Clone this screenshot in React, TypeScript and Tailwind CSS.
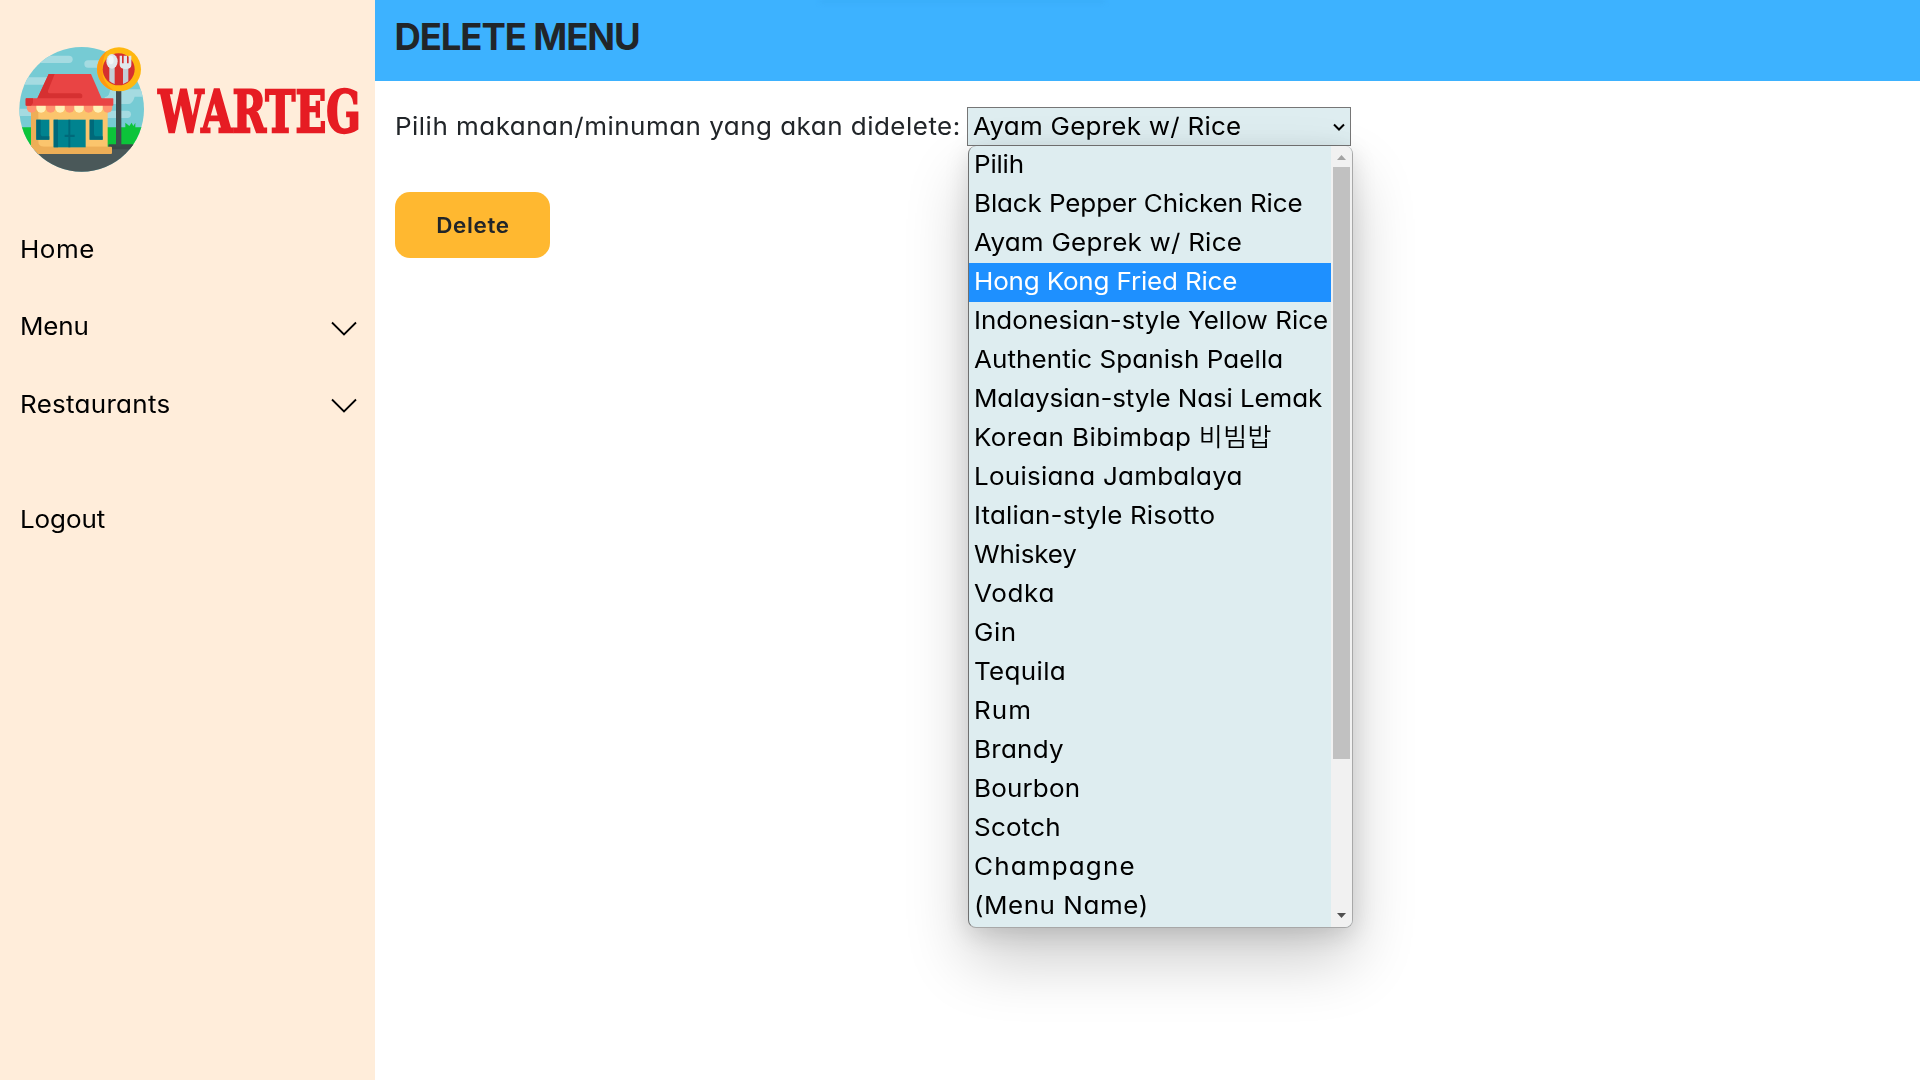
type Item = { label: string; spacing: string; extra?: string };

const options: Item[] = [
  { label: "Pilih", spacing: "tracking-[-0.2px]" },
  { label: "Black Pepper Chicken Rice", spacing: "tracking-[-0.12px]" },
  { label: "Ayam Geprek w/ Rice", spacing: "tracking-[0.2px]" },
  { label: "Hong Kong Fried Rice", spacing: "tracking-[-0.17px]" },
  { label: "Indonesian-style Yellow Rice", spacing: "tracking-normal" },
  { label: "Authentic Spanish Paella", spacing: "tracking-[0.07px]" },
  { label: "Malaysian-style Nasi Lemak", spacing: "tracking-[-0.13px]" },
  { label: "Korean Bibimbap", spacing: "tracking-[0.38px]", extra: "비빔밥" },
  { label: "Louisiana Jambalaya", spacing: "tracking-[0.22px]" },
  { label: "Italian-style Risotto", spacing: "tracking-[0.15px]" },
  { label: "Whiskey", spacing: "tracking-[-0.2px]" },
  { label: "Vodka", spacing: "tracking-[0.6px]" },
  { label: "Gin", spacing: "tracking-[0.5px]" },
  { label: "Tequila", spacing: "tracking-[0.3px]" },
  { label: "Rum", spacing: "tracking-[1px]" },
  { label: "Brandy", spacing: "tracking-[0.25px]" },
  { label: "Bourbon", spacing: "tracking-[0.15px]" },
  { label: "Scotch", spacing: "tracking-[0.2px]" },
  { label: "Champagne", spacing: "tracking-[1.08px]" },
  { label: "(Menu Name)", spacing: "tracking-[0.49px]" },
];
const highlighted = "Hong Kong Fried Rice";

function Label({ label, spacing, extra }: Item) {
  return (
    <span className={`inline-block origin-left scale-x-[1.062] whitespace-nowrap ${spacing}`}>
      {label}
      {extra && <span className="ml-[7px] font-[350] tracking-[0.4px]">{extra}</span>}
    </span>
  );
}

function Logo() {
  return (
    <svg className="h-[160px] w-[375px] shrink-0" viewBox="0 0 1125 480">
      <defs>
        <clipPath id="disc">
          <circle cx="245" cy="238" r="187" />
        </clipPath>
      </defs>
      <g clipPath="url(#disc)">
        <rect x="50" y="50" width="390" height="380" fill="#76CBD4" />
        <g fill="#A5DBE1">
          <rect x="90" y="77" width="128" height="22" rx="11" />
          <rect x="253" y="91" width="120" height="22" rx="11" />
          <rect x="40" y="142" width="150" height="22" rx="11" />
          <rect x="40" y="236" width="90" height="22" rx="11" />
          <path d="M330 178h110v22h-36q-6 22-20 22h-70v-20q16-2 16-24z" />
          <rect x="300" y="242" width="93" height="22" rx="11" />
        </g>
        <path d="M50 292H376V278l12 10 7-10 5 10 6-10v14h40v60H50z" fill="#0CC43A" />
        <path d="M50 360H326V345H440v90H50z" fill="#4A5859" />
        <path d="M326 343H410V358H326z" fill="#3C4849" />
        <rect x="348" y="176" width="16" height="174" fill="#3F4C4E" />
        <rect x="93" y="226" width="230" height="128" fill="#FBC56D" />
        <path d="M93 226h22v108q0 16 16 16h190v4H93z" fill="#EDAE57" />
        <rect x="80" y="350" width="256" height="22" rx="3" fill="#EDAE57" />
        <rect x="109" y="269" width="39" height="60" fill="#00838F" />
        <path d="M109 269h13v42q0 8 8 8h18v10h-39z" fill="#00697A" />
        <rect x="269" y="269" width="39" height="60" fill="#00838F" />
        <path d="M269 269h13v42q0 8 8 8h18v10h-39z" fill="#00697A" />
        <rect x="161" y="269" width="96" height="83" fill="#00838F" />
        <path d="M161 269h13v83h-13zM205 269h6v83h-6zM194 314h30v7h-30z" fill="#00697A" />
      </g>
      <path d="M146 132H273L306 208H111z" fill="#E94444" />
      <path d="M146 132h18l-20 50q-2 8 8 8h86q9 0 9 8t-9 9H111z" fill="#D63031" />
      {[0, 1, 2, 3, 4, 5, 6, 7, 8].map((i) => (
        <path
          key={i}
          transform={`translate(${80.5 + i * 28.5} 224)`}
          d="M0 0h28.5v10a14.25 14.25 0 0 1-28.5 0z"
          fill={i % 2 ? "#FFF1B8" : "#FF9470"}
        />
      ))}
      <rect x="77" y="205" width="263" height="22" rx="2" fill="#E94444" />
      <path d="M79 205h20v12q0 6-6 10H79q-2 0-2-2v-18q0-2 2-2z" fill="#D63031" />
      <circle cx="357" cy="118" r="66" fill="#FFB70F" />
      <path d="M321 63a66 66 0 0 0 20 119q-36-24-34-64 0-34 14-55z" fill="#FF9811" />
      <circle cx="356" cy="118" r="48" fill="#D6302F" />
      <path d="M328 108h16v54q-9-3-16-9zM369 108h16v46q-8 5-16 8z" fill="#C3CFD6" />
      <ellipse cx="336" cy="94" rx="17" ry="22" fill="#E1E8EC" />
      <ellipse cx="333" cy="90" rx="8" ry="13" fill="#F1F5F7" />
      <path d="M359 77h7v23h5V77h10v23h5V77h8v28q0 11-17 13-17-2-18-13z" fill="#E1E8EC" />
      <text
        transform="translate(475 306) scale(0.701 1)"
        className="fill-[#E61C23] stroke-[#E61C23] font-['DejaVu_Serif',serif] text-[173px] font-bold [stroke-width:7]"
      >
        WARTEG
      </text>
    </svg>
  );
}

function Chevron() {
  return (
    <svg className="mt-[4px] h-6 w-[26px]" viewBox="0 0 26 24" fill="none" stroke="#000" strokeWidth="1.8">
      <path d="M1 5.500L13 17.500L25 5.500" />
    </svg>
  );
}

function Dropdown() {
  return (
    <div className="absolute top-[38px] left-0 z-10 flex h-[782px] w-[385px] overflow-hidden rounded-lg border border-t-0 border-[#a8a8a8] border-l-[#6f6f6f] bg-[#DEEDF0] shadow-[0_32px_64px_rgba(0,0,0,0.2),0_6px_24px_rgba(0,0,0,0.13)]">
      <ul className="w-[362px]">
        {options.map((o) => (
          <li
            key={o.label}
            className={
              o.label === highlighted
                ? "h-[39px] bg-[#1E90FF] pl-[4.600px] leading-[36px] font-normal text-white"
                : "h-[39px] pl-[4.600px] leading-[36px]"
            }
          >
            <Label {...o} />
          </li>
        ))}
      </ul>
      <div className="flex w-[21px] flex-col items-center bg-[#F1F1F1]">
        <svg className="mt-[9px] h-[5px] w-[9px]" viewBox="0 0 9 5">
          <path d="M0 5L4.500 0L9 5z" fill="#A3A3A3" />
        </svg>
        <div className="mt-[7px] h-[592px] w-[17px] bg-[#C1C1C1]" />
        <svg className="mt-auto mb-[9px] h-[5px] w-[9px]" viewBox="0 0 9 5">
          <path d="M0 0H9L4.500 5z" fill="#505050" />
        </svg>
      </div>
    </div>
  );
}

export default function App() {
  return (
    <div className="flex h-screen w-full overflow-hidden bg-white font-['Inter','Noto_Sans_CJK_KR',sans-serif] text-[24.5px] font-[380] text-black [font-feature-settings:'cv11'] [font-optical-sizing:none]">
      <aside className="flex w-[375px] shrink-0 flex-col bg-[#FFEDDA] pt-[30px]">
        <Logo />
        <nav className="mt-[20.5px] flex flex-col pr-[18.500px] pl-[19.500px]">
          <div className="flex h-[77.5px] items-center">
            <Label label="Home" spacing="tracking-[0.5px]" />
          </div>
          <div className="flex h-[77.5px] items-center justify-between">
            <Label label="Menu" spacing="tracking-[-0.15px]" />
            <Chevron />
          </div>
          <div className="flex h-[77.5px] items-center justify-between">
            <Label label="Restaurants" spacing="tracking-[0.25px]" />
            <Chevron />
          </div>
          <div className="mt-[38px] flex h-[77.5px] items-center">
            <Label label="Logout" spacing="tracking-[-0.1px]" />
          </div>
        </nav>
      </aside>
      <div className="flex grow flex-col">
        <header className="relative h-[81px] bg-[#3DB2FF] pl-[19.500px]">
          <div className="absolute top-0 left-[445px] h-[3px] w-[285px] bg-[#39ACF7] blur-[2px]" />
          <h1 className="flex h-[75px] items-center text-[36.5px] font-bold tracking-[-1.1px] text-[#212529] [font-optical-sizing:auto]">
            DELETE MENU
          </h1>
        </header>
        <main className="flex flex-col items-start pt-[26px] pl-5">
          <div className="flex h-[39px] items-center">
            <div className="w-[572px] text-[#212529]">
              <Label label="Pilih makanan/minuman yang akan didelete:" spacing="tracking-[0.44px]" />
            </div>
            <div className="relative flex h-[39px] w-[384px] items-center justify-between border border-[#767676] bg-[#DEEDF0] pr-[5px] pl-[4.500px]">
              <Label label="Ayam Geprek w/ Rice" spacing="tracking-[0.22px]" />
              <svg className="h-3 w-3" viewBox="0 0 12 12" fill="none" stroke="#000" strokeWidth="2">
                <path d="M1 3.500L6 8.500L11 3.500" />
              </svg>
              <Dropdown />
            </div>
          </div>
          <button className="mt-[46px] h-[66px] w-[155px] rounded-[15px] bg-[#FFB830] text-[21.4px] font-semibold text-[#212529]">
            <span className="ml-px inline-block scale-x-[1.05] tracking-[0.6px]">Delete</span>
          </button>
        </main>
      </div>
    </div>
  );
}
